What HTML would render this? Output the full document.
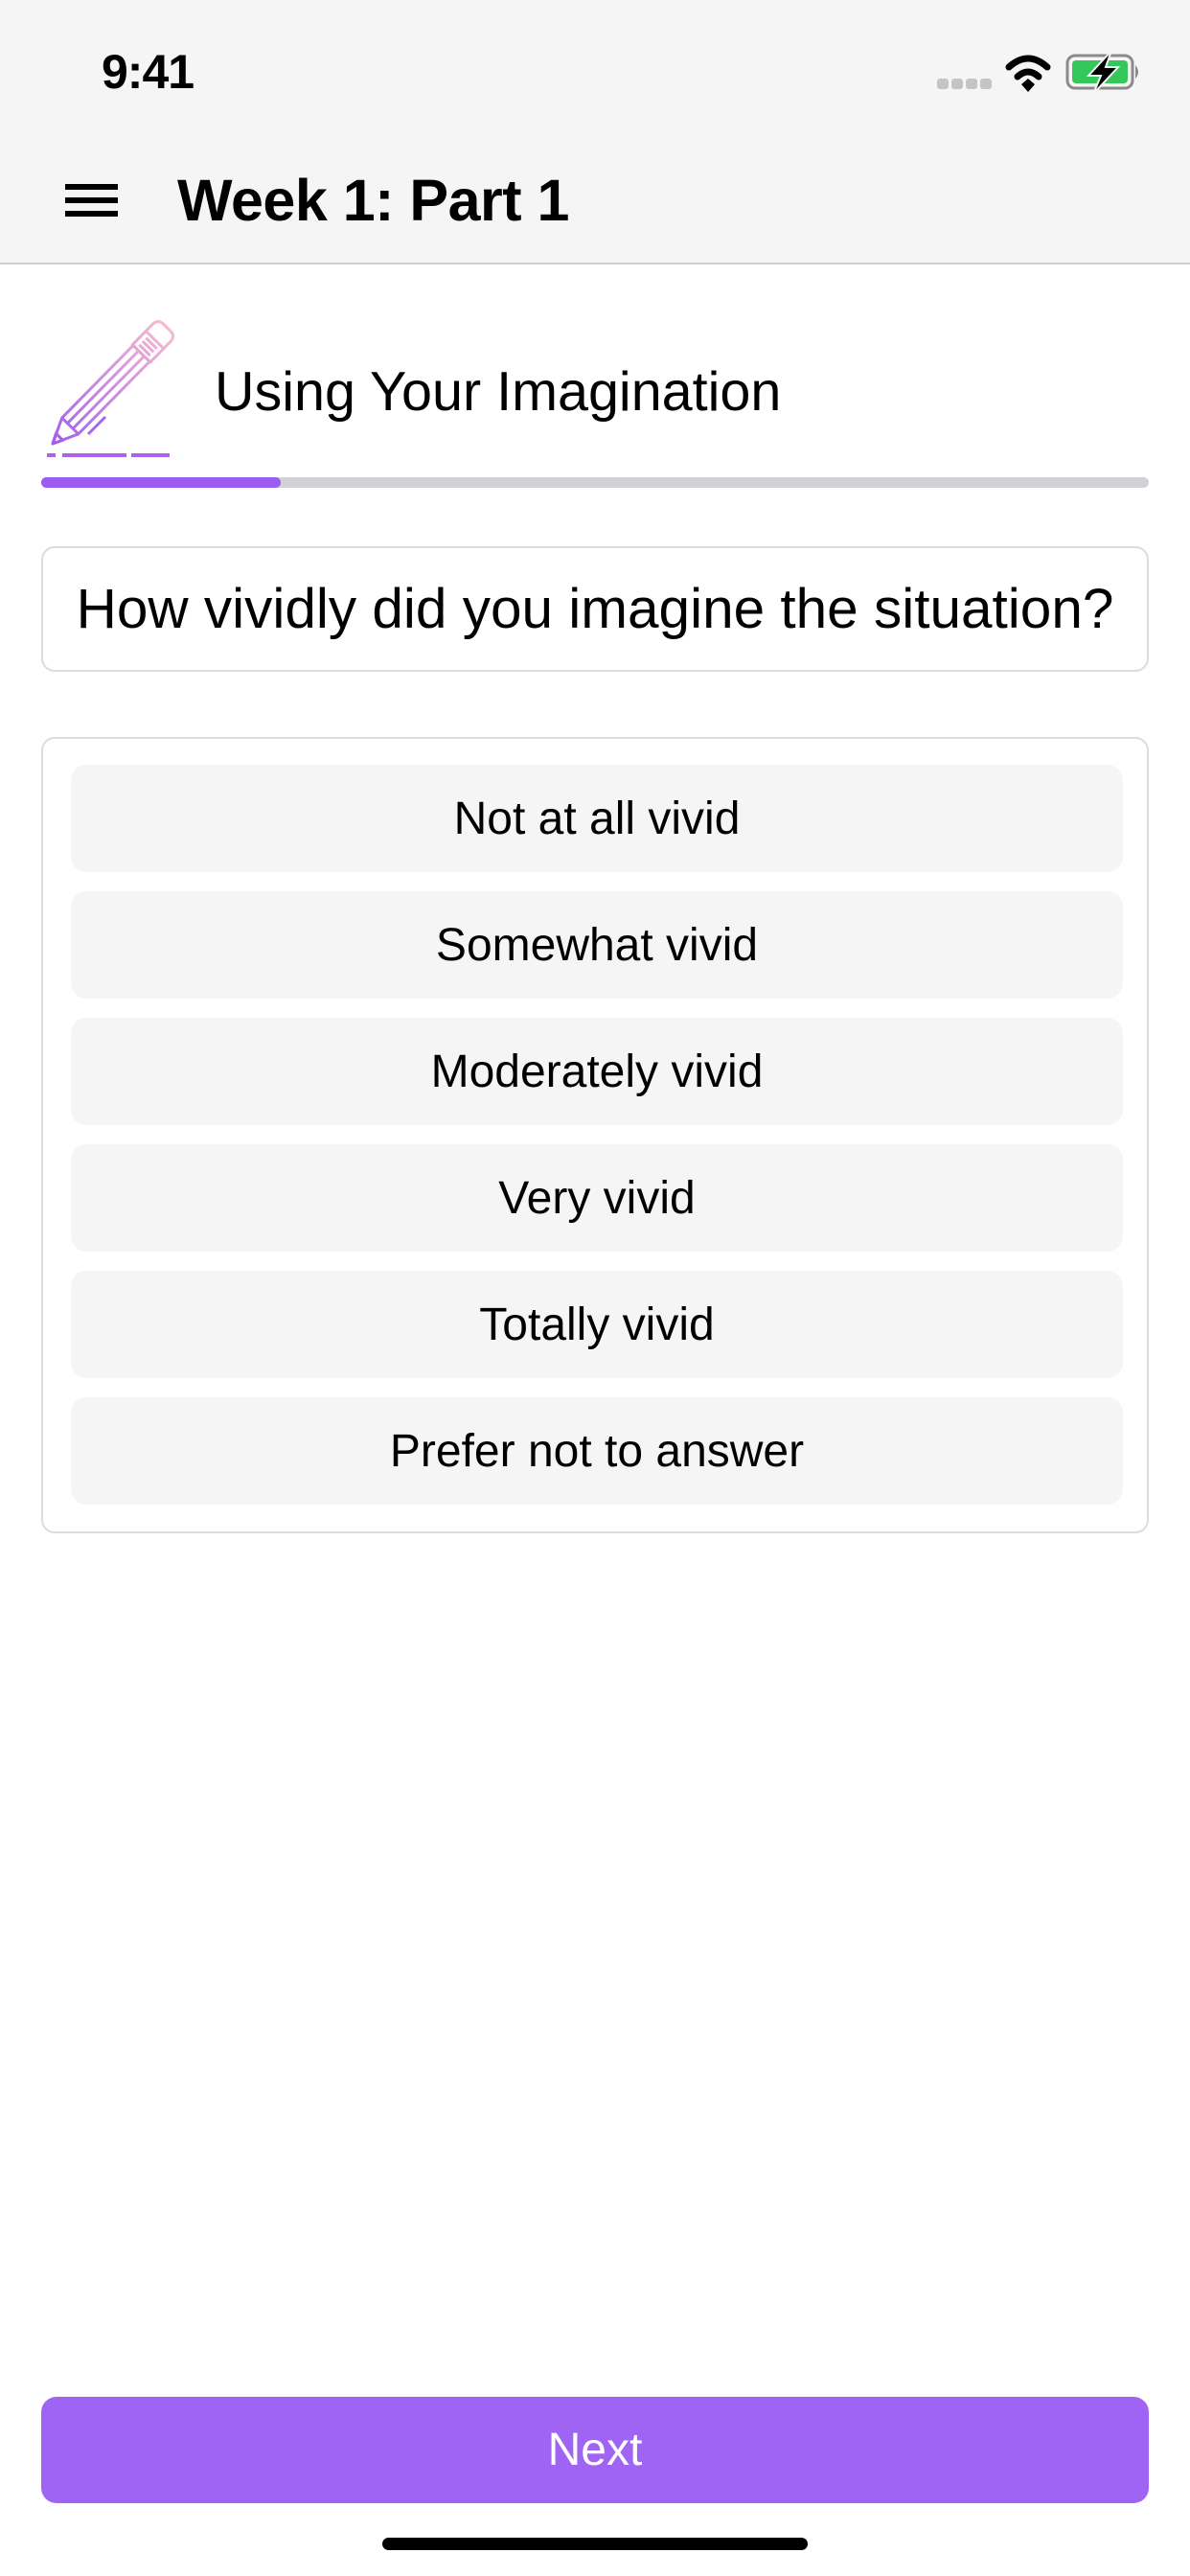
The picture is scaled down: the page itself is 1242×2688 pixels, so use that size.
<!DOCTYPE html>
<html><head><meta charset="utf-8"><style>
*{margin:0;padding:0;box-sizing:border-box}
body{width:1242px;height:2688px;background:#fff;position:relative;overflow:hidden;font-family:"Liberation Sans",sans-serif;color:#000}
.abs{position:absolute}
.hdr{left:0;top:0;width:1242px;height:276px;background:#f5f5f5;border-bottom:2px solid #cfcfcf}
.opt{position:absolute;left:29px;width:1098px;height:112px;background:#f5f5f5;border-radius:16px;font-size:48px;display:flex;align-items:center;justify-content:center}
</style></head><body>
<div class="abs hdr"></div>
<div class="abs" style="left:106px;top:46px;font-size:50px;font-weight:bold;letter-spacing:-1px">9:41</div>
<svg class="abs" style="left:0;top:0" width="1242" height="276">
<g fill="#c4c4c4"><rect x="978" y="82" width="12" height="11" rx="3"/><rect x="993" y="82" width="12" height="11" rx="3"/><rect x="1008" y="82" width="12" height="11" rx="3"/><rect x="1023" y="82" width="12" height="11" rx="3"/></g>
<g fill="none" stroke="#000" stroke-width="7" stroke-linecap="round"><path d="M1053 70 Q1073 52 1093 70"/><path d="M1062 80 Q1073 70 1084 80"/></g>
<path d="M1066 88 L1073 82 L1080 88 L1073 96 Z" fill="#000"/>
<rect x="1114" y="58" width="68" height="34" rx="8" fill="none" stroke="#8a8a8a" stroke-width="3"/>
<rect x="1119" y="63" width="58" height="24" rx="4" fill="#34c759"/>
<path d="M1185 68 Q1191 75 1185 82 Z" fill="#8a8a8a"/>
<path d="M1160 53 L1136 79 L1149 79 L1141 98 L1167 70 L1154 70 Z" fill="#000" stroke="#f5f5f5" stroke-width="2"/>
<g fill="#000"><rect x="68" y="192" width="55" height="6"/><rect x="68" y="206" width="55" height="6"/><rect x="68" y="220" width="55" height="6"/></g>
</svg>
<svg class="abs" style="left:0;top:300px" width="220" height="200" viewBox="0 300 220 200">
<defs><linearGradient id="g" gradientUnits="userSpaceOnUse" x1="0" y1="0" x2="170" y2="0"><stop offset="0" stop-color="#a05cf0"/><stop offset="0.45" stop-color="#c88ae0"/><stop offset="1" stop-color="#f8b9cf"/></linearGradient></defs>
<g transform="translate(55,463) rotate(-45.5)" fill="none" stroke="url(#g)" stroke-width="3" stroke-linejoin="round">
<path d="M0 0 L26 -12 L132 -12 L132 12 L26 12 Z"/>
<path d="M0 0 L10 -5 L10 5 Z"/>
<path d="M26 -12 L26 12 M26 -4 L132 -4 M26 4 L132 4"/>
<rect x="132" y="-13" width="20" height="26"/>
<path d="M137 -8 V8 M142 -8 V8 M147 -8 V8"/>
<path d="M152 -13 H162 Q170 -13 170 -5 V5 Q170 13 162 13 H152"/>
</g>
<g stroke="#a963f0" stroke-width="4"><path d="M49 475H58M65 475H132M137 475H177"/><path d="M92 453L110 435" stroke="#a565f0" stroke-width="3"/></g>
</svg>
<div class="abs" style="left:185px;top:174px;font-size:61px;font-weight:bold;line-height:70px;letter-spacing:-0.5px">Week 1: Part 1</div>
<div class="abs" style="left:224px;top:376px;font-size:57.5px;line-height:66px">Using Your Imagination</div>
<div class="abs" style="left:43px;top:498px;width:1156px;height:11px;border-radius:6px;background:#d1d1d6"></div>
<div class="abs" style="left:43px;top:498px;width:250px;height:11px;border-radius:6px;background:#9b5cf0"></div>
<div class="abs" style="left:43px;top:570px;width:1156px;height:131px;border:2px solid #dcdcdc;border-radius:14px;display:flex;align-items:center;justify-content:center;font-size:58.5px">How vividly did you imagine the situation?</div>
<div class="abs" style="left:43px;top:769px;width:1156px;height:831px;border:2px solid #dcdcdc;border-radius:14px">
<div class="opt" style="top:27px">Not at all vivid</div>
<div class="opt" style="top:159px">Somewhat vivid</div>
<div class="opt" style="top:291px">Moderately vivid</div>
<div class="opt" style="top:423px">Very vivid</div>
<div class="opt" style="top:555px">Totally vivid</div>
<div class="opt" style="top:687px">Prefer not to answer</div>
</div>
<div class="abs" style="left:43px;top:2501px;width:1156px;height:111px;border-radius:16px;background:#a064f4;color:#fff;font-size:48px;display:flex;align-items:center;justify-content:center">Next</div>
<div class="abs" style="left:399px;top:2648px;width:444px;height:13px;border-radius:7px;background:#000"></div>
</body></html>
